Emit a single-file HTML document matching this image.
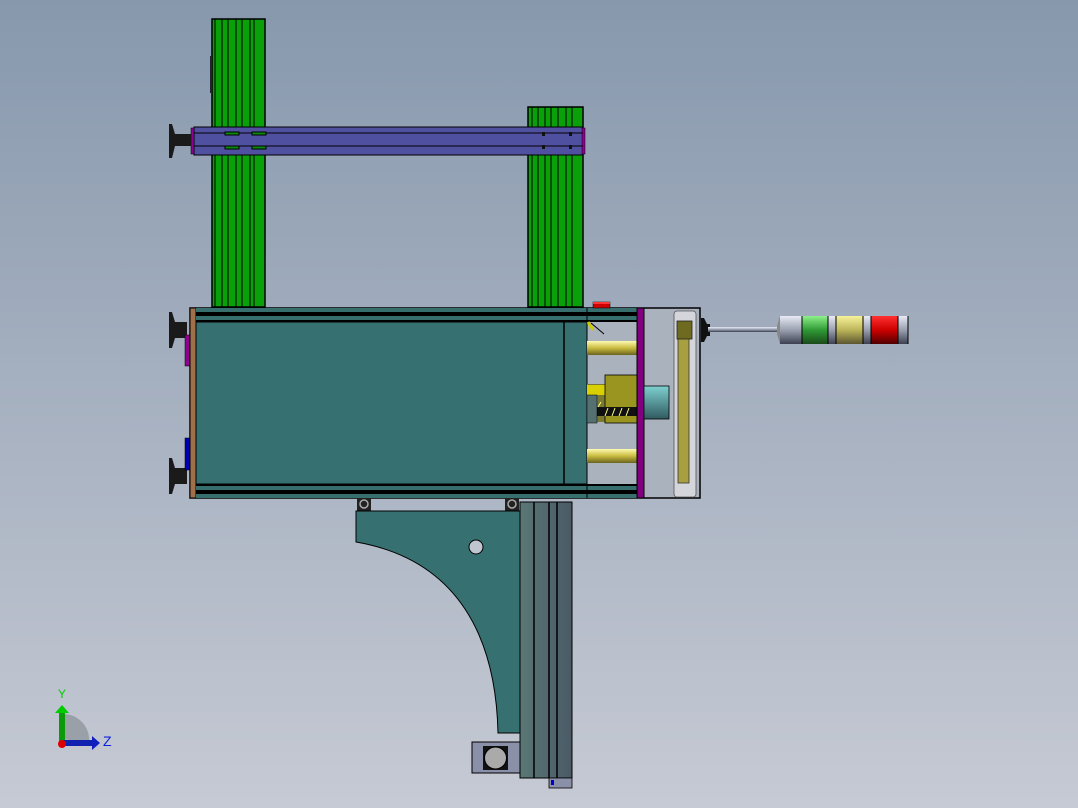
<!DOCTYPE html>
<html><head><meta charset="utf-8"><style>html,body{margin:0;padding:0;width:1078px;height:808px;overflow:hidden}</style></head>
<body>
<svg width="1078" height="808" viewBox="0 0 1078 808" xmlns="http://www.w3.org/2000/svg" font-family="Liberation Sans, sans-serif">
<defs>
<linearGradient id="bg" x1="0" y1="0" x2="0" y2="1"><stop offset="0" stop-color="#8798ad"/><stop offset="1" stop-color="#c6cad4"/></linearGradient>
<linearGradient id="gold" x1="0" y1="0" x2="0" y2="1"><stop offset="0" stop-color="#fffbb0"/><stop offset=".5" stop-color="#c9bb40"/><stop offset="1" stop-color="#6b6420"/></linearGradient>
<linearGradient id="cyan" x1="0" y1="0" x2="0" y2="1"><stop offset="0" stop-color="#7fd0d0"/><stop offset="1" stop-color="#2f5a60"/></linearGradient>
<linearGradient id="sil" x1="0" y1="0" x2="0" y2="1"><stop offset="0" stop-color="#e8eaf6"/><stop offset=".5" stop-color="#9aa0b0"/><stop offset="1" stop-color="#3c4050"/></linearGradient>
<linearGradient id="grn" x1="0" y1="0" x2="0" y2="1"><stop offset="0" stop-color="#8ef08a"/><stop offset=".5" stop-color="#2f9a34"/><stop offset="1" stop-color="#1a4a1a"/></linearGradient>
<linearGradient id="yel" x1="0" y1="0" x2="0" y2="1"><stop offset="0" stop-color="#f6f29a"/><stop offset=".5" stop-color="#bdb55a"/><stop offset="1" stop-color="#5a5530"/></linearGradient>
<linearGradient id="red" x1="0" y1="0" x2="0" y2="1"><stop offset="0" stop-color="#ff3030"/><stop offset=".5" stop-color="#cc0000"/><stop offset="1" stop-color="#500000"/></linearGradient>
<linearGradient id="col" x1="0" y1="0" x2="1" y2="0"><stop offset="0" stop-color="#5a7775"/><stop offset="1" stop-color="#4a5a66"/></linearGradient>
</defs>
<rect width="1078" height="808" fill="url(#bg)"/>

<g stroke="#000" stroke-width="1.5">
<rect x="212" y="19" width="53" height="288" fill="#0aa00a"/>
<rect x="528" y="107" width="55" height="200" fill="#0aa00a"/>
</g>
<g stroke="#000" stroke-width="1">
<path d="M215 19V307M222 19V307M228 19V307M236 19V307M242 19V307M250 19V307M254 19V307"/>
<path d="M532 107V307M538 107V307M545 107V307M551 107V307M558 107V307M566 107V307M572 107V307"/>
</g>
<rect x="210" y="56" width="2" height="37" fill="#223"/>
<rect x="194" y="127" width="389" height="28" fill="#5050a0" stroke="#000" stroke-width="1"/>
<rect x="191" y="128" width="3" height="26" fill="#900090" stroke="#000" stroke-width=".5"/>
<rect x="582" y="128" width="3" height="26" fill="#900090" stroke="#000" stroke-width=".5"/>
<path d="M194 133H583M194 146H583" stroke="#000" stroke-width="1"/>
<g fill="#0a8a0a" stroke="#000" stroke-width="1"><rect x="225" y="132" width="14" height="3"/><rect x="252" y="132" width="14" height="3"/><rect x="225" y="146" width="14" height="3"/><rect x="252" y="146" width="14" height="3"/></g>
<g fill="#111"><rect x="542" y="132" width="3" height="4"/><rect x="569" y="132" width="3" height="4"/><rect x="542" y="145" width="3" height="4"/><rect x="569" y="145" width="3" height="4"/></g>
<g fill="#1a1a1a">
<path d="M169 124h3l3 10h16v12h-16l-3 12h-3z"/>
<path d="M169 312h3l3 10h12v16h-12l-3 10h-3z"/>
<path d="M169 458h3l3 10h12v16h-12l-3 10h-3z"/>
</g>
<rect x="185" y="335" width="5" height="31" fill="#900090" stroke="#000" stroke-width=".5"/>
<rect x="185" y="438" width="5" height="32" fill="#0000b0" stroke="#000" stroke-width=".5"/>

<rect x="190" y="308" width="510" height="190" fill="#aab2be" stroke="#000" stroke-width="1.5"/>
<rect x="190" y="308" width="6" height="190" fill="#a0704a" stroke="#000" stroke-width="1"/>
<rect x="196" y="308" width="441" height="14" fill="#376f6e"/>
<rect x="196" y="484" width="441" height="14" fill="#376f6e"/>
<rect x="196" y="312" width="441" height="4" fill="#000"/>
<rect x="196" y="320" width="441" height="2" fill="#000"/>
<rect x="196" y="484" width="441" height="2" fill="#000"/>
<rect x="196" y="490" width="441" height="4" fill="#000"/>
<rect x="196" y="322" width="391" height="162" fill="#377070" stroke="#000" stroke-width="1"/>
<path d="M564 322V484" stroke="#000" stroke-width="1.5"/>
<path d="M587 308V498" stroke="#000" stroke-width="1"/>
<rect x="587" y="341" width="50" height="14" fill="url(#gold)"/>
<rect x="587" y="449" width="50" height="14" fill="url(#gold)"/>
<rect x="587" y="384" width="30" height="38" fill="#7a7a30"/>
<rect x="587" y="385" width="28" height="10" fill="#d8d000"/>
<rect x="605" y="375" width="32" height="48" fill="#9a9420" stroke="#000" stroke-width=".8"/>
<rect x="587" y="407" width="50" height="9" fill="#111"/>
<path d="M598 407l3 -5M605 416l3-8M612 416l3-8M619 416l3-8M626 416l3-8" stroke="#ff8" stroke-width="1"/>
<rect x="587" y="395" width="10" height="28" fill="#557070" stroke="#000" stroke-width=".5"/>
<path d="M588 322l5 8" stroke="#cc0" stroke-width="3"/>
<path d="M591 323l13 11" stroke="#000" stroke-width="1"/>
<rect x="637" y="308" width="7" height="190" fill="#800080" stroke="#000" stroke-width="1"/>
<rect x="644" y="386" width="25" height="33" fill="url(#cyan)" stroke="#000" stroke-width=".8"/>
<rect x="674" y="311" width="22" height="186" rx="3" fill="#d4d6dc" stroke="#555" stroke-width=".8"/>
<rect x="678" y="322" width="11" height="161" fill="#a8a040" stroke="#333" stroke-width=".8"/>
<rect x="677" y="321" width="15" height="18" fill="#6e6a20" stroke="#222" stroke-width=".8"/>
<rect x="593" y="302" width="17" height="6" fill="#c00" stroke="#000" stroke-width=".5"/>
<rect x="593" y="302" width="17" height="2" fill="#f33"/>
<path d="M701 318h3l3 6h3v12h-3l-3 6h-3z" fill="#111"/>
<rect x="708" y="327" width="69" height="5" fill="url(#sil)"/>
<path d="M777 326l3-10v28l-3-10z" fill="#888"/>
<rect x="780" y="316" width="22" height="28" fill="url(#sil)"/>
<rect x="802" y="316" width="26" height="28" fill="url(#grn)"/>
<rect x="828" y="316" width="8" height="28" fill="url(#sil)"/>
<rect x="836" y="316" width="27" height="28" fill="url(#yel)"/>
<rect x="863" y="316" width="8" height="28" fill="url(#sil)"/>
<rect x="871" y="316" width="27" height="28" fill="url(#red)"/>
<rect x="898" y="316" width="10" height="28" fill="url(#sil)"/>
<path d="M802 316v28M828 316v28M836 316v28M863 316v28M871 316v28M898 316v28M908 316v28" stroke="#000" stroke-width="1"/>

<g fill="#222"><rect x="357" y="498" width="14" height="13"/><rect x="505" y="498" width="14" height="13"/></g>
<g fill="none" stroke="#aaa" stroke-width="1.5"><circle cx="364" cy="504" r="4"/><circle cx="512" cy="504" r="4"/></g>
<path d="M356 511H521V733H498C496 640 460 560 356 542Z" fill="#377070" stroke="#000" stroke-width="1"/>
<circle cx="476" cy="547" r="7" fill="#c0c6d0" stroke="#000"/>
<rect x="520" y="502" width="52" height="276" fill="url(#col)" stroke="#000" stroke-width="1"/>
<path d="M534 502V778M549 502V778M557 502V778" stroke="#000" stroke-width="1.5"/>
<rect x="472" y="742" width="48" height="31" fill="#8a90a8" stroke="#000" stroke-width="1"/>
<rect x="483" y="746" width="25" height="24" fill="#111"/>
<circle cx="495.5" cy="758" r="11" fill="#aaa" stroke="#000"/>
<rect x="549" y="778" width="23" height="10" fill="#8a90a8" stroke="#000" stroke-width=".8"/>
<rect x="551" y="780" width="3" height="5" fill="#00c"/>

<path d="M62 739 L62 714 A26 26 0 0 1 89 743 Z" fill="#9aa0a8"/>
<rect x="59" y="713" width="6" height="30" fill="#0a9a0a"/>
<path d="M55 713l7-8 7 8z" fill="#0c0"/>
<rect x="62" y="740" width="30" height="6" fill="#1020b0"/>
<path d="M92 736l8 7-8 7z" fill="#1020c0"/>
<circle cx="62" cy="744" r="4" fill="#d00"/>
<text x="58" y="698" font-size="12" fill="#0c0">Y</text>
<text x="103" y="746" font-size="14" fill="#1020e0">Z</text>
</svg>
</body></html>
